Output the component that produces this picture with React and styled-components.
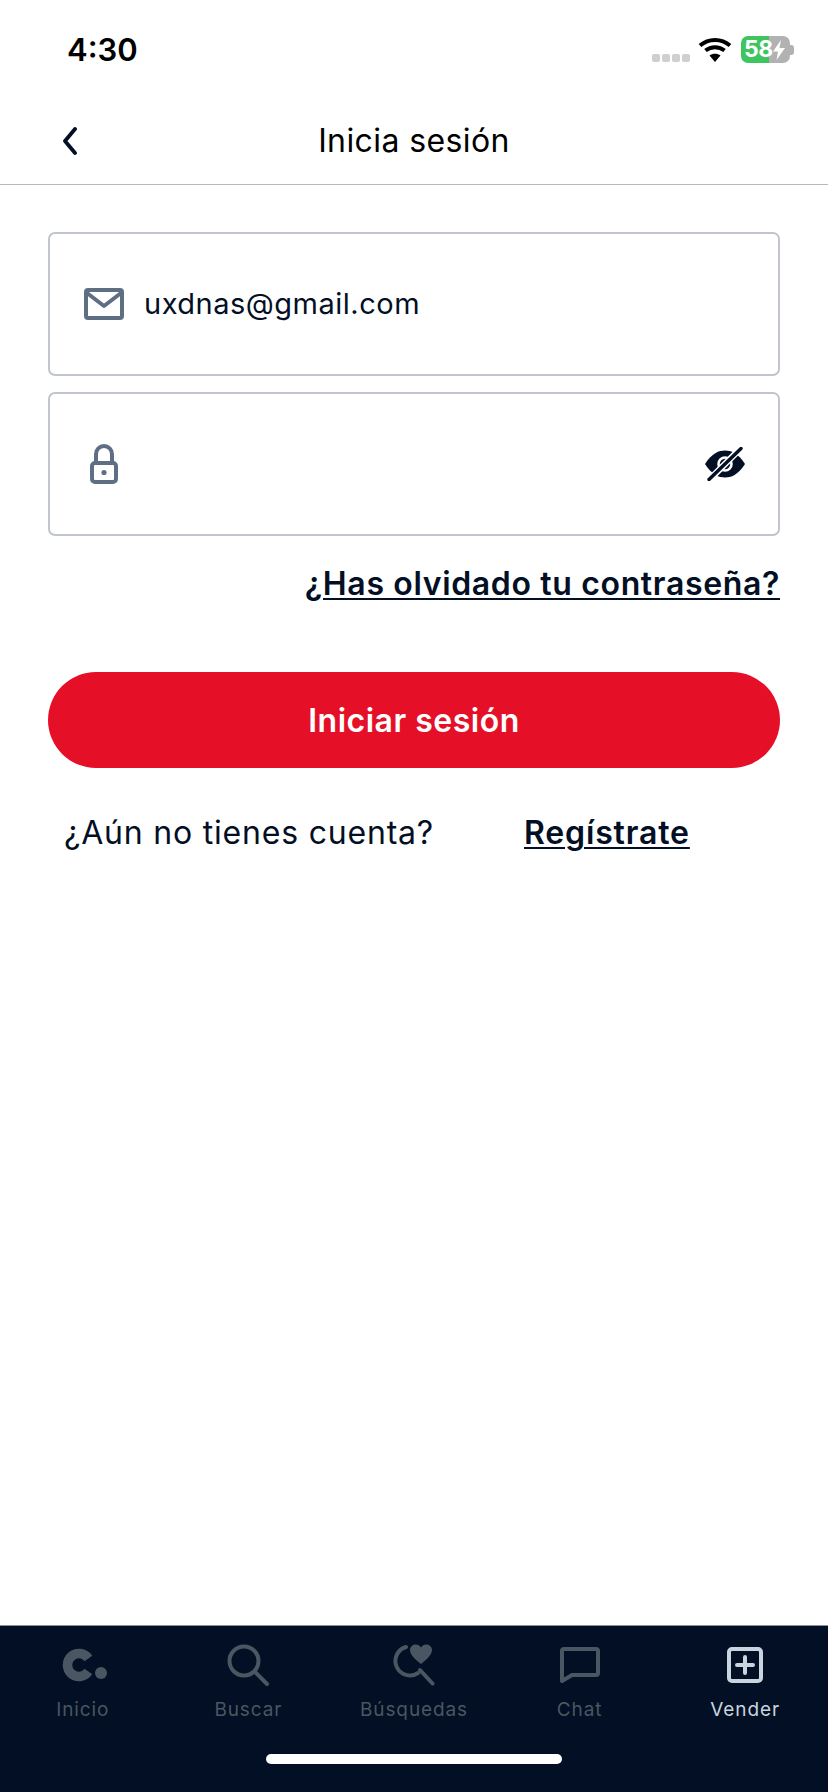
import React from 'react';
import styled, { createGlobalStyle } from 'styled-components';

const GlobalStyle = createGlobalStyle`
  html, body {
    margin: 0;
    padding: 0;
    background: #fff;
  }
  * {
    box-sizing: border-box;
  }
`;

const Page = styled.div`
  width: 828px;
  height: 1792px;
  display: flex;
  flex-direction: column;
  background: #fff;
  color: #020f24;
  font-family: Inter, "Liberation Sans", sans-serif;
  overflow: hidden;
`;

const StatusBar = styled.div`
  height: 100px;
  display: flex;
  justify-content: space-between;
  align-items: flex-start;
  padding: 28px 34px 0 67px;
`;

const Time = styled.div`
  font-size: 31px;
  line-height: 44px;
  font-weight: 600;
  color: #000;
`;

const StatusIcons = styled.div`
  display: flex;
  align-items: center;
  padding-top: 8px;
`;

const Dots = styled.div`
  display: flex;
  gap: 2px;
  margin: 16px 8px 0 0;
`;

const Dot = styled.span`
  width: 8px;
  height: 8px;
  border-radius: 2px;
  background: #cfcfcf;
`;

const Battery = styled.div`
  width: 49px;
  height: 27px;
  margin-left: 9px;
  border-radius: 7px;
  display: flex;
  align-items: center;
  padding-left: 3px;
  background: linear-gradient(90deg, #3fc45f 0 28px, #b2b2b2 28px);
  color: #fff;
  font-size: 23px;
  line-height: 27px;
  font-weight: 700;
  letter-spacing: -0.5px;
`;

const BatteryTip = styled.span`
  width: 4px;
  height: 10px;
  border-radius: 0 3px 3px 0;
  background: #b2b2b2;
`;

const NavBar = styled.header`
  height: 85px;
  display: grid;
  grid-template-columns: 1fr auto 1fr;
  align-items: center;
  padding: 0 60px 3px;
  border-bottom: 1px solid #b9b9b9;
`;

const NavTitle = styled.h1`
  margin: 0;
  font-size: 32px;
  line-height: 40px;
  font-weight: 400;
  letter-spacing: 0.4px;
  color: #000;
`;

const Content = styled.main`
  flex: 1;
  display: flex;
  flex-direction: column;
  padding: 47px 48px 0;
`;

const Field = styled.div`
  height: 144px;
  display: flex;
  align-items: center;
  justify-content: space-between;
  border: 2px solid #c1c5cd;
  border-radius: 7px;
  padding: 0 32px 0 34px;
  margin-bottom: ${(p) => p.$gap || 0}px;
`;

const FieldMain = styled.div`
  display: flex;
  align-items: center;
  gap: 20px;
`;

const FieldIcon = styled.div`
  width: 40px;
  display: flex;
  justify-content: center;
`;

const FieldText = styled.span`
  font-size: 29px;
  line-height: 40px;
  letter-spacing: 0.5px;
  color: #020f24;
`;

const ForgotRow = styled.div`
  display: flex;
  justify-content: flex-end;
  margin-top: 28px;
`;

const BoldLink = styled.a`
  font-size: 32px;
  line-height: 40px;
  font-weight: 600;
  letter-spacing: ${(p) => p.$spacing}px;
  color: #020f24;
  text-decoration: underline;
  text-decoration-thickness: 2px;
  text-underline-offset: 3px;
`;

const PrimaryButton = styled.button`
  height: 96px;
  margin-top: 68px;
  border: none;
  border-radius: 48px;
  background: #e51028;
  color: #fff;
  font-family: inherit;
  font-size: 32px;
  font-weight: 600;
  letter-spacing: 0.5px;
`;

const SignupRow = styled.div`
  display: flex;
  align-items: center;
  margin-top: 45px;
  padding-left: 16px;
`;

const SignupText = styled.span`
  width: 460px;
  font-size: 32px;
  line-height: 40px;
  letter-spacing: 0.8px;
  color: #020f24;
`;

const TabBar = styled.nav`
  height: 167px;
  display: flex;
  flex-direction: column;
  background: #020f24;
  border-top: 1px solid #8a8f99;
`;

const Tabs = styled.div`
  display: grid;
  grid-template-columns: repeat(5, 1fr);
  padding-top: 17px;
`;

const Tab = styled.div`
  display: flex;
  flex-direction: column;
  align-items: center;
  color: ${(p) => (p.$active ? '#c9d4de' : '#4a5661')};
`;

const TabIcon = styled.div`
  height: 44px;
  display: flex;
  align-items: center;
  justify-content: center;
`;

const TabLabel = styled.span`
  margin-top: 10px;
  font-size: 19px;
  line-height: 26px;
  letter-spacing: 0.9px;
`;

const HomeIndicator = styled.div`
  width: 296px;
  height: 10px;
  margin: 31px auto 0;
  border-radius: 5px;
  background: #fff;
`;

const BackIcon = () => (
  <svg width="20" height="28" viewBox="0 0 20 28" fill="none" stroke="#020f24" strokeWidth="3.8" strokeLinecap="round" strokeLinejoin="round">
    <path d="M15 2 L5 14 L15 26" />
  </svg>
);

const WifiIcon = () => (
  <svg width="34" height="25" viewBox="0 0 34 25" fill="none" stroke="#000" strokeWidth="4">
    <path d="M2 8.5 C10.5 1 23.5 1 32 8.5" />
    <path d="M7.5 13.5 C13 9 21 9 26.5 13.5" />
    <path d="M17 25 L11.5 18.5 C14.5 16 19.5 16 22.5 18.5 Z" fill="#000" stroke="none" />
  </svg>
);

const BoltIcon = () => (
  <svg width="12" height="20" viewBox="0 0 12 20" fill="#fff">
    <path d="M8 0 L0 11.5 H5 L3.5 20 L12 8 H6.5 Z" />
  </svg>
);

const MailIcon = () => (
  <svg width="40" height="32" viewBox="0 0 40 32" fill="none" stroke="#5f6f83" strokeWidth="4" strokeLinejoin="round">
    <rect x="2" y="2" width="36" height="28" rx="2" />
    <path d="M3 5 L20 18 L37 5" />
  </svg>
);

const LockIcon = () => (
  <svg width="28" height="40" viewBox="0 0 28 40" fill="none" stroke="#5f6f83" strokeWidth="4">
    <rect x="2" y="19" width="24" height="19" rx="3" />
    <path d="M6 19 V10 A8 8 0 0 1 22 10 V19" />
    <circle cx="14" cy="28.5" r="2.6" fill="#5f6f83" stroke="none" />
  </svg>
);

const EyeOffIcon = () => (
  <svg width="42" height="34" viewBox="0 0 42 34">
    <path d="M1 17 C8 6 15 3.5 21 3.5 C27 3.5 34 6 41 17 C34 28 27 30.5 21 30.5 C15 30.5 8 28 1 17 Z" fill="#020f24" />
    <circle cx="21" cy="17" r="6.5" fill="none" stroke="#fff" strokeWidth="2.6" />
    <path d="M5 33 L37 1" stroke="#fff" strokeWidth="6.5" />
    <path d="M5 32.5 L37 1.5" stroke="#020f24" strokeWidth="3.4" strokeLinecap="round" />
  </svg>
);

const HomeTabIcon = () => (
  <svg width="48" height="36" viewBox="-4 0 48 36" fill="none" stroke="currentColor">
    <path d="M25.4 11.4 A11.5 11.5 0 1 0 25.4 24.6" strokeWidth="9.5" />
    <circle cx="38" cy="26" r="6" fill="currentColor" stroke="none" />
  </svg>
);

const SearchTabIcon = () => (
  <svg width="42" height="42" viewBox="0 0 42 42" fill="none" stroke="currentColor" strokeWidth="4" strokeLinecap="round">
    <circle cx="17" cy="17" r="14.5" />
    <path d="M28 28 L40 40" />
  </svg>
);

const SavedTabIcon = () => (
  <svg width="42" height="42" viewBox="0 0 42 42" fill="none" stroke="currentColor" strokeWidth="4" strokeLinecap="round">
    <path d="M13 3 A14.5 14.5 0 1 0 25 29" />
    <path d="M27 26 L39.5 39.5" />
    <path d="M28 20 C22 15 17 11 17 6 C17 2.5 20 0.5 23 0.5 C25 0.5 27 1.5 28 3.5 C29 1.5 31 0.5 33 0.5 C36 0.5 39 2.5 39 6 C39 11 34 15 28 20 Z" fill="currentColor" stroke="none" />
  </svg>
);

const ChatTabIcon = () => (
  <svg width="40" height="36" viewBox="0 0 40 36" fill="none" stroke="currentColor" strokeWidth="4" strokeLinejoin="round">
    <path d="M4 2 H36 A2 2 0 0 1 38 4 V26 A2 2 0 0 1 36 28 H12 L2 34 V4 A2 2 0 0 1 4 2 Z" />
  </svg>
);

const SellTabIcon = () => (
  <svg width="36" height="36" viewBox="0 0 36 36" fill="none" stroke="currentColor" strokeWidth="4" strokeLinecap="round">
    <rect x="2" y="2" width="32" height="32" rx="3" />
    <path d="M18 10 V26 M10 18 H26" />
  </svg>
);

const tabs = [
  { label: 'Inicio', Icon: HomeTabIcon },
  { label: 'Buscar', Icon: SearchTabIcon },
  { label: 'Búsquedas', Icon: SavedTabIcon },
  { label: 'Chat', Icon: ChatTabIcon },
  { label: 'Vender', Icon: SellTabIcon, active: true },
];

const App = () => (
  <Page>
    <GlobalStyle />
    <StatusBar>
      <Time>4:30</Time>
      <StatusIcons>
        <Dots>
          <Dot />
          <Dot />
          <Dot />
          <Dot />
        </Dots>
        <WifiIcon />
        <Battery>
          58
          <BoltIcon />
        </Battery>
        <BatteryTip />
      </StatusIcons>
    </StatusBar>
    <NavBar>
      <BackIcon />
      <NavTitle>Inicia sesión</NavTitle>
    </NavBar>
    <Content>
      <Field $gap={16}>
        <FieldMain>
          <FieldIcon>
            <MailIcon />
          </FieldIcon>
          <FieldText>uxdnas@gmail.com</FieldText>
        </FieldMain>
      </Field>
      <Field>
        <FieldMain>
          <FieldIcon>
            <LockIcon />
          </FieldIcon>
        </FieldMain>
        <EyeOffIcon />
      </Field>
      <ForgotRow>
        <BoldLink $spacing={0.65}>¿Has olvidado tu contraseña?</BoldLink>
      </ForgotRow>
      <PrimaryButton>Iniciar sesión</PrimaryButton>
      <SignupRow>
        <SignupText>¿Aún no tienes cuenta?</SignupText>
        <BoldLink $spacing={0.85}>Regístrate</BoldLink>
      </SignupRow>
    </Content>
    <TabBar>
      <Tabs>
        {tabs.map(({ label, Icon, active }) => (
          <Tab key={label} $active={active}>
            <TabIcon>
              <Icon />
            </TabIcon>
            <TabLabel>{label}</TabLabel>
          </Tab>
        ))}
      </Tabs>
      <HomeIndicator />
    </TabBar>
  </Page>
);

export default App;
